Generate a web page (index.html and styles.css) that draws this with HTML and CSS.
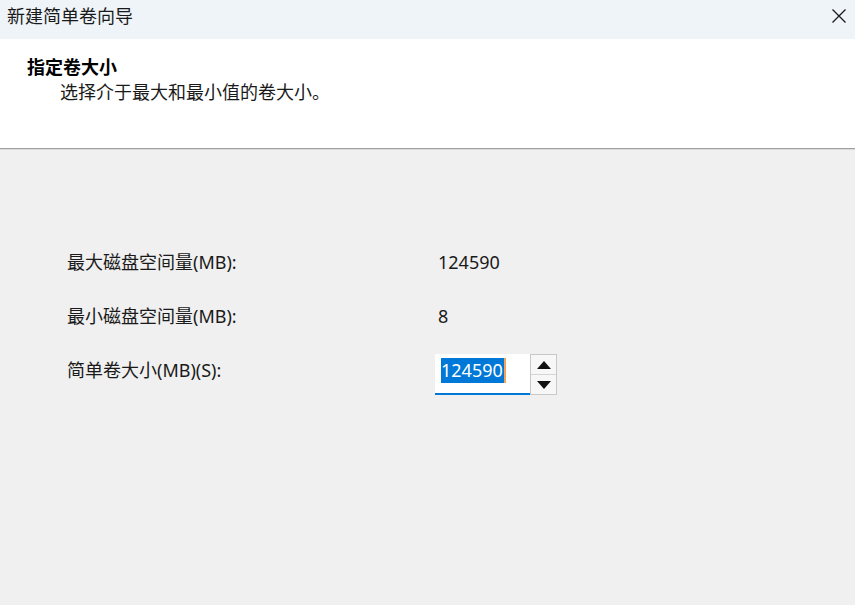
FILE: index.html
```html
<!DOCTYPE html>
<html lang="zh-CN">
<head>
<meta charset="utf-8">
<title>新建简单卷向导</title>
<link rel="stylesheet" href="styles.css">
</head>
<body>
<div class="window">
  <div class="titlebar">
    <span class="title">新建简单卷向导</span>
    <svg class="close" width="16" height="16" viewBox="0 0 16 16"><path d="M1.5 1.5 L14.5 14.5 M14.5 1.5 L1.5 14.5" stroke="#1a1a1a" stroke-width="1.3" fill="none"/></svg>
  </div>
  <div class="header">
    <div class="h-title">指定卷大小</div>
    <div class="h-sub">选择介于最大和最小值的卷大小。</div>
  </div>
  <div class="content">
    <div class="form">
      <div class="label">最大磁盘空间量(MB):</div>
      <div class="value">124590</div>
      <div class="label">最小磁盘空间量(MB):</div>
      <div class="value">8</div>
      <div class="label label-spin">简单卷大小(MB)(S):</div>
      <div class="spinner">
        <div class="spin-input"><span class="sel">124590</span></div>
        <div class="spin-btns">
          <div class="spin-btn"><svg width="14" height="8" viewBox="0 0 14 8"><path d="M7 0 L14 8 L0 8 Z" fill="#111"/></svg></div>
          <div class="spin-btn"><svg width="14" height="8" viewBox="0 0 14 8"><path d="M0 0 L14 0 L7 8 Z" fill="#111"/></svg></div>
        </div>
      </div>
    </div>
  </div>
</div>
</body>
</html>
```
FILE: styles.css
```css
* { box-sizing: border-box; }
html, body { margin: 0; padding: 0; }
body {
  width: 855px;
  height: 605px;
  overflow: hidden;
  background: #f0f0f0;
  font-family: "Noto Sans", "Noto Sans CJK SC", sans-serif;
  color: #1b1b1b;
}
.window { display: flex; flex-direction: column; height: 605px; }
.titlebar {
  height: 39px;
  background: #eff4f9;
  display: flex;
  align-items: center;
  justify-content: space-between;
  padding: 0 7px 7px 7px;
}
.title { font-size: 18px; line-height: 24px; color: #1a1a1a; }
.close { margin-right: 1px; margin-top: 0; }
.header {
  height: 110px;
  background: #fff;
  padding-top: 16px;
  border-bottom: 1px solid #a0a0a0;
  box-shadow: 0 1px 0 #dadada;
}
.h-title {
  font-weight: bold;
  font-size: 18px;
  line-height: 24px;
  padding-left: 27px;
  color: #000;
}
.h-sub {
  font-size: 18px;
  line-height: 24px;
  padding-left: 60px;
  margin-top: 1px;
  color: #1a1a1a;
}
.content { flex: 1; padding: 101px 0 0 67px; }
.form {
  display: grid;
  grid-template-columns: 368px auto;
  row-gap: 30px;
  align-items: start;
  font-size: 18px;
  line-height: 24px;
}
.label { color: #1a1a1a; }
.value { padding-left: 3px; color: #1a1a1a; }
.label-spin { padding-top: 4px; margin-top: -4px; }
.spinner { display: flex; margin-top: -4px; height: 41px; }
.spin-input {
  width: 95px;
  height: 41px;
  background: #fff;
  border-bottom: 2px solid #0078d7;
  padding: 4px 0 0 6px;
}
.sel {
  display: inline-block;
  background: #0078d7;
  color: #fff;
  height: 25px;
  line-height: 25px;
  padding-right: 1px;
  border-right: 2px solid #f5a25a;
}
.spin-btns {
  width: 27px;
  height: 41px;
  display: flex;
  flex-direction: column;
  border: 1px solid #c8c8c8;
  background: #fff;
}
.spin-btn {
  flex: 1;
  display: flex;
  align-items: center;
  justify-content: center;
  background: #f7f7f7;
}
.spin-btn + .spin-btn { border-top: 1px solid #d4d4d4; }
```
